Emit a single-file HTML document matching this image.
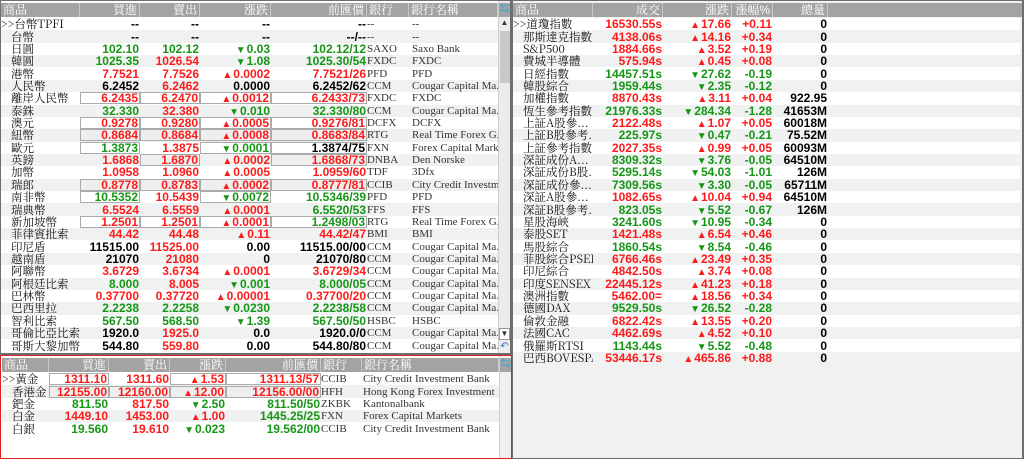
<!DOCTYPE html>
<html><head><meta charset="utf-8">
<style>
*{box-sizing:border-box;margin:0;padding:0}
body{width:1024px;height:459px;background:#6e6e6e;position:relative;overflow:hidden;font-family:"Liberation Sans","Noto Sans CJK TC",sans-serif}
.pan{position:absolute;background:#fff;overflow:hidden}
.hd{position:absolute;left:0;top:2px;height:14px;background:#a3a3a3;color:#fff;font-size:12px;line-height:14px;display:flex;font-family:"Liberation Sans","Noto Serif CJK SC",serif}
.hd span{border-right:1px solid #c8c8c8;padding:0 2px;white-space:nowrap;overflow:hidden}
.rows{position:absolute;left:0;top:17px}
.r{height:12.37px;display:flex;align-items:center;white-space:nowrap}
.r:nth-child(even){background:#f0f1f1}
.r span{display:block;overflow:hidden;white-space:nowrap;height:12px;line-height:12px;font-size:12px;font-weight:bold;text-align:right;padding-right:1px}
.r span.n{text-align:left;font-weight:normal;font-family:"Noto Serif CJK SC","Noto Sans CJK TC",serif;font-size:11.5px;color:#111;padding-left:10px;line-height:12px;display:flex;align-items:center}
.r span.n.f{padding-left:0}
.r span.b{text-align:left;font-weight:normal;font-family:"Liberation Serif",serif;color:#333;font-size:11px}
.g{color:#159615}.d{color:#ff1a1a}.k{color:#000}
span.x{border:1px solid #aaa;height:12px;line-height:10px;background:#fff}
.r:nth-child(even) span.x{background:#eee}
i{font-style:normal;font-size:10px;margin-right:1px}
.sb{position:absolute;background:#ececec;border-left:1px solid #ccc}
</style></head><body>

<!-- LEFT TOP -->
<div class="pan" style="left:1px;top:1px;width:509px;height:352px">
<div class="hd" style="width:497px"><span style="width:79px">商品</span><span style="width:60px;text-align:right">買進</span><span style="width:60px;text-align:right">賣出</span><span style="width:71px;text-align:right">漲跌</span><span style="width:96px;text-align:right">前匯價</span><span style="width:42px">銀行</span><span style="width:89px">銀行名稱</span></div>
<div class="rows" style="width:497px">
<div class="r k"><span class="n f" style="width:79px">&gt;&gt;台幣TPFI</span><span style="width:60px">--</span><span style="width:60px">--</span><span style="width:71px">--</span><span style="width:96px">--</span><span class="b" style="width:42px">--</span><span class="b" style="width:89px;padding-left:3px">--</span></div>
<div class="r k"><span class="n" style="width:79px">台幣</span><span style="width:60px">--</span><span style="width:60px">--</span><span style="width:71px">--</span><span style="width:96px">--/--</span><span class="b" style="width:42px">--</span><span class="b" style="width:89px;padding-left:3px">--</span></div>
<div class="r"><span class="n" style="width:79px">日圓</span><span class="g" style="width:60px">102.10</span><span class="g" style="width:60px">102.12</span><span class="g" style="width:71px"><i>▼</i>0.03</span><span class="g" style="width:96px">102.12/12</span><span class="b" style="width:42px">SAXO</span><span class="b" style="width:89px;padding-left:3px">Saxo Bank</span></div>
<div class="r"><span class="n" style="width:79px">韓圓</span><span class="g" style="width:60px">1025.35</span><span class="d" style="width:60px">1026.54</span><span class="g" style="width:71px"><i>▼</i>1.08</span><span class="g" style="width:96px">1025.30/54</span><span class="b" style="width:42px">FXDC</span><span class="b" style="width:89px;padding-left:3px">FXDC</span></div>
<div class="r"><span class="n" style="width:79px">港幣</span><span class="d" style="width:60px">7.7521</span><span class="d" style="width:60px">7.7526</span><span class="d" style="width:71px"><i>▲</i>0.0002</span><span class="d" style="width:96px">7.7521/26</span><span class="b" style="width:42px">PFD</span><span class="b" style="width:89px;padding-left:3px">PFD</span></div>
<div class="r"><span class="n" style="width:79px">人民幣</span><span class="k" style="width:60px">6.2452</span><span class="d" style="width:60px">6.2462</span><span class="k" style="width:71px">0.0000</span><span class="k" style="width:96px">6.2452/62</span><span class="b" style="width:42px">CCM</span><span class="b" style="width:89px;padding-left:3px">Cougar Capital Ma...</span></div>
<div class="r"><span class="n" style="width:79px">離岸人民幣</span><span class="d x" style="width:60px">6.2435</span><span class="d x" style="width:60px">6.2470</span><span class="d x" style="width:71px"><i>▲</i>0.0012</span><span class="d x" style="width:96px">6.2433/73</span><span class="b" style="width:42px">FXDC</span><span class="b" style="width:89px;padding-left:3px">FXDC</span></div>
<div class="r"><span class="n" style="width:79px">泰銖</span><span class="g" style="width:60px">32.330</span><span class="d" style="width:60px">32.380</span><span class="g" style="width:71px"><i>▼</i>0.010</span><span class="g" style="width:96px">32.330/80</span><span class="b" style="width:42px">CCM</span><span class="b" style="width:89px;padding-left:3px">Cougar Capital Ma...</span></div>
<div class="r"><span class="n" style="width:79px">澳元</span><span class="d x" style="width:60px">0.9278</span><span class="d x" style="width:60px">0.9280</span><span class="d x" style="width:71px"><i>▲</i>0.0005</span><span class="d x" style="width:96px">0.9276/81</span><span class="b" style="width:42px">DCFX</span><span class="b" style="width:89px;padding-left:3px">DCFX</span></div>
<div class="r"><span class="n" style="width:79px">紐幣</span><span class="d x" style="width:60px">0.8684</span><span class="d x" style="width:60px">0.8684</span><span class="d x" style="width:71px"><i>▲</i>0.0008</span><span class="d x" style="width:96px">0.8683/84</span><span class="b" style="width:42px">RTG</span><span class="b" style="width:89px;padding-left:3px">Real Time Forex G...</span></div>
<div class="r"><span class="n" style="width:79px">歐元</span><span class="g x" style="width:60px">1.3873</span><span class="d" style="width:60px">1.3875</span><span class="g x" style="width:71px"><i>▼</i>0.0001</span><span class="k x" style="width:96px">1.3874/75</span><span class="b" style="width:42px">FXN</span><span class="b" style="width:89px;padding-left:3px">Forex Capital Mark...</span></div>
<div class="r"><span class="n" style="width:79px">英鎊</span><span class="d" style="width:60px">1.6868</span><span class="d x" style="width:60px">1.6870</span><span class="d" style="width:71px"><i>▲</i>0.0002</span><span class="d x" style="width:96px">1.6868/73</span><span class="b" style="width:42px">DNBA</span><span class="b" style="width:89px;padding-left:3px">Den Norske</span></div>
<div class="r"><span class="n" style="width:79px">加幣</span><span class="d" style="width:60px">1.0958</span><span class="d" style="width:60px">1.0960</span><span class="d" style="width:71px"><i>▲</i>0.0005</span><span class="d" style="width:96px">1.0959/60</span><span class="b" style="width:42px">TDF</span><span class="b" style="width:89px;padding-left:3px">3Dfx</span></div>
<div class="r"><span class="n" style="width:79px">瑞郎</span><span class="d x" style="width:60px">0.8778</span><span class="d x" style="width:60px">0.8783</span><span class="d x" style="width:71px"><i>▲</i>0.0002</span><span class="d x" style="width:96px">0.8777/81</span><span class="b" style="width:42px">CCIB</span><span class="b" style="width:89px;padding-left:3px">City Credit Investm...</span></div>
<div class="r"><span class="n" style="width:79px">南非幣</span><span class="g x" style="width:60px">10.5352</span><span class="d" style="width:60px">10.5439</span><span class="g x" style="width:71px"><i>▼</i>0.0072</span><span class="g" style="width:96px">10.5346/39</span><span class="b" style="width:42px">PFD</span><span class="b" style="width:89px;padding-left:3px">PFD</span></div>
<div class="r"><span class="n" style="width:79px">瑞典幣</span><span class="d" style="width:60px">6.5524</span><span class="d" style="width:60px">6.5559</span><span class="d" style="width:71px"><i>▲</i>0.0001</span><span class="g" style="width:96px">6.5520/53</span><span class="b" style="width:42px">FFS</span><span class="b" style="width:89px;padding-left:3px">FFS</span></div>
<div class="r"><span class="n" style="width:79px">新加坡幣</span><span class="d x" style="width:60px">1.2501</span><span class="d x" style="width:60px">1.2501</span><span class="d x" style="width:71px"><i>▲</i>0.0001</span><span class="g x" style="width:96px">1.2498/03</span><span class="b" style="width:42px">RTG</span><span class="b" style="width:89px;padding-left:3px">Real Time Forex G...</span></div>
<div class="r"><span class="n" style="width:79px">菲律賓批索</span><span class="d" style="width:60px">44.42</span><span class="d" style="width:60px">44.48</span><span class="d" style="width:71px"><i>▲</i>0.11</span><span class="d" style="width:96px">44.42/47</span><span class="b" style="width:42px">BMI</span><span class="b" style="width:89px;padding-left:3px">BMI</span></div>
<div class="r"><span class="n" style="width:79px">印尼盾</span><span class="k" style="width:60px">11515.00</span><span class="d" style="width:60px">11525.00</span><span class="k" style="width:71px">0.00</span><span class="k" style="width:96px">11515.00/00</span><span class="b" style="width:42px">CCM</span><span class="b" style="width:89px;padding-left:3px">Cougar Capital Ma...</span></div>
<div class="r"><span class="n" style="width:79px">越南盾</span><span class="k" style="width:60px">21070</span><span class="d" style="width:60px">21080</span><span class="k" style="width:71px">0</span><span class="k" style="width:96px">21070/80</span><span class="b" style="width:42px">CCM</span><span class="b" style="width:89px;padding-left:3px">Cougar Capital Ma...</span></div>
<div class="r"><span class="n" style="width:79px">阿聯幣</span><span class="d" style="width:60px">3.6729</span><span class="d" style="width:60px">3.6734</span><span class="d" style="width:71px"><i>▲</i>0.0001</span><span class="d" style="width:96px">3.6729/34</span><span class="b" style="width:42px">CCM</span><span class="b" style="width:89px;padding-left:3px">Cougar Capital Ma...</span></div>
<div class="r"><span class="n" style="width:79px">阿根廷比索</span><span class="g" style="width:60px">8.000</span><span class="d" style="width:60px">8.005</span><span class="g" style="width:71px"><i>▼</i>0.001</span><span class="g" style="width:96px">8.000/05</span><span class="b" style="width:42px">CCM</span><span class="b" style="width:89px;padding-left:3px">Cougar Capital Ma...</span></div>
<div class="r"><span class="n" style="width:79px">巴林幣</span><span class="d" style="width:60px">0.37700</span><span class="d" style="width:60px">0.37720</span><span class="d" style="width:71px"><i>▲</i>0.00001</span><span class="d" style="width:96px">0.37700/20</span><span class="b" style="width:42px">CCM</span><span class="b" style="width:89px;padding-left:3px">Cougar Capital Ma...</span></div>
<div class="r"><span class="n" style="width:79px">巴西里拉</span><span class="g" style="width:60px">2.2238</span><span class="g" style="width:60px">2.2258</span><span class="g" style="width:71px"><i>▼</i>0.0230</span><span class="g" style="width:96px">2.2238/58</span><span class="b" style="width:42px">CCM</span><span class="b" style="width:89px;padding-left:3px">Cougar Capital Ma...</span></div>
<div class="r"><span class="n" style="width:79px">智利比索</span><span class="g" style="width:60px">567.50</span><span class="g" style="width:60px">568.50</span><span class="g" style="width:71px"><i>▼</i>1.39</span><span class="g" style="width:96px">567.50/50</span><span class="b" style="width:42px">HSBC</span><span class="b" style="width:89px;padding-left:3px">HSBC</span></div>
<div class="r"><span class="n" style="width:79px">哥倫比亞比索</span><span class="k" style="width:60px">1920.0</span><span class="d" style="width:60px">1925.0</span><span class="k" style="width:71px">0.0</span><span class="k" style="width:96px">1920.0/0</span><span class="b" style="width:42px">CCM</span><span class="b" style="width:89px;padding-left:3px">Cougar Capital Ma...</span></div>
<div class="r"><span class="n" style="width:79px">哥斯大黎加幣</span><span class="k" style="width:60px">544.80</span><span class="d" style="width:60px">559.80</span><span class="k" style="width:71px">0.00</span><span class="k" style="width:96px">544.80/80</span><span class="b" style="width:42px">CCM</span><span class="b" style="width:89px;padding-left:3px">Cougar Capital Ma...</span></div>
</div>
<div class="sb" style="left:497px;top:0;width:12px;height:352px"></div>
<div style="position:absolute;left:498px;top:2px;width:11px;height:14px;background:#a3a3a3;color:#2ad;font-size:10px;line-height:14px;text-align:center">⇆</div>
<div style="position:absolute;left:498px;top:17px;width:11px;height:12px;font-size:8px;text-align:center;color:#333">▲</div>
<div style="position:absolute;left:499px;top:30px;width:10px;height:52px;background:#c9c9c9"></div>
<div style="position:absolute;left:498px;top:327px;width:11px;height:12px;font-size:8px;text-align:center;color:#333;border:1px solid #999;background:#fff">▼</div>
<div style="position:absolute;left:498px;top:340px;width:11px;height:12px;font-size:10px;line-height:12px;text-align:center;color:#36c">↶</div>
</div>

<!-- LEFT BOTTOM -->
<div class="pan" style="left:0;top:355px;width:512px;height:104px;border:1px solid #e02020;background:#fff">
<div class="hd" style="width:497px;top:2px;left:1px"><span style="width:47px">商品</span><span style="width:60px;text-align:right">買進</span><span style="width:61px;text-align:right">賣出</span><span style="width:56px;text-align:right">漲跌</span><span style="width:95px;text-align:right">前匯價</span><span style="width:41px">銀行</span><span style="width:137px">銀行名稱</span></div>
<div class="rows" style="width:497px;top:17px;left:1px">
<div class="r"><span class="n f" style="width:47px">&gt;&gt;黃金</span><span class="d x" style="width:60px">1311.10</span><span class="d" style="width:61px">1311.60</span><span class="d x" style="width:56px"><i>▲</i>1.53</span><span class="d x" style="width:95px">1311.13/57</span><span class="b" style="width:41px">CCIB</span><span class="b" style="width:137px;padding-left:1px">City Credit Investment Bank</span></div>
<div class="r"><span class="n" style="width:47px">香港金</span><span class="d x" style="width:60px">12155.00</span><span class="d x" style="width:61px">12160.00</span><span class="d x" style="width:56px"><i>▲</i>12.00</span><span class="d x" style="width:95px">12156.00/00</span><span class="b" style="width:41px">HFH</span><span class="b" style="width:137px;padding-left:1px">Hong Kong Forex Investment</span></div>
<div class="r"><span class="n" style="width:47px">鈀金</span><span class="g" style="width:60px">811.50</span><span class="d" style="width:61px">817.50</span><span class="g" style="width:56px"><i>▼</i>2.50</span><span class="g" style="width:95px">811.50/50</span><span class="b" style="width:41px">ZKBK</span><span class="b" style="width:137px;padding-left:1px">Kantonalbank</span></div>
<div class="r"><span class="n" style="width:47px">白金</span><span class="d" style="width:60px">1449.10</span><span class="d" style="width:61px">1453.00</span><span class="d" style="width:56px"><i>▲</i>1.00</span><span class="g" style="width:95px">1445.25/25</span><span class="b" style="width:41px">FXN</span><span class="b" style="width:137px;padding-left:1px">Forex Capital Markets</span></div>
<div class="r"><span class="n" style="width:47px">白銀</span><span class="g" style="width:60px">19.560</span><span class="d" style="width:61px">19.610</span><span class="g" style="width:56px"><i>▼</i>0.023</span><span class="g" style="width:95px">19.562/00</span><span class="b" style="width:41px">CCIB</span><span class="b" style="width:137px;padding-left:1px">City Credit Investment Bank</span></div>
</div>
<div class="sb" style="left:498px;top:0;width:12px;height:102px;background:#f0f0f0"></div>
<div style="position:absolute;left:499px;top:2px;width:11px;height:14px;background:#a3a3a3;color:#2ad;font-size:10px;line-height:14px;text-align:center">⇆</div>
</div>

<!-- RIGHT -->
<div class="pan" style="left:513px;top:1px;width:509px;height:457px;background:#f0f1f1">
<div class="hd" style="width:509px"><span style="width:80px">商品</span><span style="width:70px;text-align:right">成交</span><span style="width:69px;text-align:right">漲跌</span><span style="width:41px;text-align:right">漲幅%</span><span style="width:55px;text-align:right">總量</span><span style="flex:1;border:none"></span></div>
<div class="rows" style="width:507px;background:#fff">
<div class="r"><span class="n f" style="width:80px">&gt;&gt;道瓊指數</span><span class="d" style="width:70px">16530.55s</span><span class="d" style="width:69px"><i>▲</i>17.66</span><span class="d" style="width:41px">+0.11</span><span class="k" style="width:55px">0</span></div>
<div class="r"><span class="n" style="width:80px">那斯達克指數</span><span class="d" style="width:70px">4138.06s</span><span class="d" style="width:69px"><i>▲</i>14.16</span><span class="d" style="width:41px">+0.34</span><span class="k" style="width:55px">0</span></div>
<div class="r"><span class="n" style="width:80px">S&amp;P500</span><span class="d" style="width:70px">1884.66s</span><span class="d" style="width:69px"><i>▲</i>3.52</span><span class="d" style="width:41px">+0.19</span><span class="k" style="width:55px">0</span></div>
<div class="r"><span class="n" style="width:80px">費城半導體</span><span class="d" style="width:70px">575.94s</span><span class="d" style="width:69px"><i>▲</i>0.45</span><span class="d" style="width:41px">+0.08</span><span class="k" style="width:55px">0</span></div>
<div class="r"><span class="n" style="width:80px">日經指數</span><span class="g" style="width:70px">14457.51s</span><span class="g" style="width:69px"><i>▼</i>27.62</span><span class="g" style="width:41px">-0.19</span><span class="k" style="width:55px">0</span></div>
<div class="r"><span class="n" style="width:80px">韓股綜合</span><span class="g" style="width:70px">1959.44s</span><span class="g" style="width:69px"><i>▼</i>2.35</span><span class="g" style="width:41px">-0.12</span><span class="k" style="width:55px">0</span></div>
<div class="r"><span class="n" style="width:80px">加權指數</span><span class="d" style="width:70px">8870.43s</span><span class="d" style="width:69px"><i>▲</i>3.11</span><span class="d" style="width:41px">+0.04</span><span class="k" style="width:55px">922.95</span></div>
<div class="r"><span class="n" style="width:80px">恆生參考指數</span><span class="g" style="width:70px">21976.33s</span><span class="g" style="width:69px"><i>▼</i>284.34</span><span class="g" style="width:41px">-1.28</span><span class="k" style="width:55px">41653M</span></div>
<div class="r"><span class="n" style="width:80px">上証A股參...</span><span class="d" style="width:70px">2122.48s</span><span class="d" style="width:69px"><i>▲</i>1.07</span><span class="d" style="width:41px">+0.05</span><span class="k" style="width:55px">60018M</span></div>
<div class="r"><span class="n" style="width:80px">上証B股參考...</span><span class="g" style="width:70px">225.97s</span><span class="g" style="width:69px"><i>▼</i>0.47</span><span class="g" style="width:41px">-0.21</span><span class="k" style="width:55px">75.52M</span></div>
<div class="r"><span class="n" style="width:80px">上証參考指數</span><span class="d" style="width:70px">2027.35s</span><span class="d" style="width:69px"><i>▲</i>0.99</span><span class="d" style="width:41px">+0.05</span><span class="k" style="width:55px">60093M</span></div>
<div class="r"><span class="n" style="width:80px">深証成份A...</span><span class="g" style="width:70px">8309.32s</span><span class="g" style="width:69px"><i>▼</i>3.76</span><span class="g" style="width:41px">-0.05</span><span class="k" style="width:55px">64510M</span></div>
<div class="r"><span class="n" style="width:80px">深証成份B股...</span><span class="g" style="width:70px">5295.14s</span><span class="g" style="width:69px"><i>▼</i>54.03</span><span class="g" style="width:41px">-1.01</span><span class="k" style="width:55px">126M</span></div>
<div class="r"><span class="n" style="width:80px">深証成份參...</span><span class="g" style="width:70px">7309.56s</span><span class="g" style="width:69px"><i>▼</i>3.30</span><span class="g" style="width:41px">-0.05</span><span class="k" style="width:55px">65711M</span></div>
<div class="r"><span class="n" style="width:80px">深証A股參...</span><span class="d" style="width:70px">1082.65s</span><span class="d" style="width:69px"><i>▲</i>10.04</span><span class="d" style="width:41px">+0.94</span><span class="k" style="width:55px">64510M</span></div>
<div class="r"><span class="n" style="width:80px">深証B股參考...</span><span class="g" style="width:70px">823.05s</span><span class="g" style="width:69px"><i>▼</i>5.52</span><span class="g" style="width:41px">-0.67</span><span class="k" style="width:55px">126M</span></div>
<div class="r"><span class="n" style="width:80px">星股海峽</span><span class="g" style="width:70px">3241.60s</span><span class="g" style="width:69px"><i>▼</i>10.95</span><span class="g" style="width:41px">-0.34</span><span class="k" style="width:55px">0</span></div>
<div class="r"><span class="n" style="width:80px">泰股SET</span><span class="d" style="width:70px">1421.48s</span><span class="d" style="width:69px"><i>▲</i>6.54</span><span class="d" style="width:41px">+0.46</span><span class="k" style="width:55px">0</span></div>
<div class="r"><span class="n" style="width:80px">馬股綜合</span><span class="g" style="width:70px">1860.54s</span><span class="g" style="width:69px"><i>▼</i>8.54</span><span class="g" style="width:41px">-0.46</span><span class="k" style="width:55px">0</span></div>
<div class="r"><span class="n" style="width:80px">菲股綜合PSEI</span><span class="d" style="width:70px">6766.46s</span><span class="d" style="width:69px"><i>▲</i>23.49</span><span class="d" style="width:41px">+0.35</span><span class="k" style="width:55px">0</span></div>
<div class="r"><span class="n" style="width:80px">印尼綜合</span><span class="d" style="width:70px">4842.50s</span><span class="d" style="width:69px"><i>▲</i>3.74</span><span class="d" style="width:41px">+0.08</span><span class="k" style="width:55px">0</span></div>
<div class="r"><span class="n" style="width:80px">印度SENSEX</span><span class="d" style="width:70px">22445.12s</span><span class="d" style="width:69px"><i>▲</i>41.23</span><span class="d" style="width:41px">+0.18</span><span class="k" style="width:55px">0</span></div>
<div class="r"><span class="n" style="width:80px">澳洲指數</span><span class="d" style="width:70px">5462.00=</span><span class="d" style="width:69px"><i>▲</i>18.56</span><span class="d" style="width:41px">+0.34</span><span class="k" style="width:55px">0</span></div>
<div class="r"><span class="n" style="width:80px">德國DAX</span><span class="g" style="width:70px">9529.50s</span><span class="g" style="width:69px"><i>▼</i>26.52</span><span class="g" style="width:41px">-0.28</span><span class="k" style="width:55px">0</span></div>
<div class="r"><span class="n" style="width:80px">倫敦金融</span><span class="d" style="width:70px">6822.42s</span><span class="d" style="width:69px"><i>▲</i>13.55</span><span class="d" style="width:41px">+0.20</span><span class="k" style="width:55px">0</span></div>
<div class="r"><span class="n" style="width:80px">法國CAC</span><span class="d" style="width:70px">4462.69s</span><span class="d" style="width:69px"><i>▲</i>4.52</span><span class="d" style="width:41px">+0.10</span><span class="k" style="width:55px">0</span></div>
<div class="r"><span class="n" style="width:80px">俄羅斯RTSI</span><span class="g" style="width:70px">1143.44s</span><span class="g" style="width:69px"><i>▼</i>5.52</span><span class="g" style="width:41px">-0.48</span><span class="k" style="width:55px">0</span></div>
<div class="r"><span class="n" style="width:80px">巴西BOVESPA</span><span class="d" style="width:70px">53446.17s</span><span class="d" style="width:69px"><i>▲</i>465.86</span><span class="d" style="width:41px">+0.88</span><span class="k" style="width:55px">0</span></div>
</div>
</div>
</body></html>
